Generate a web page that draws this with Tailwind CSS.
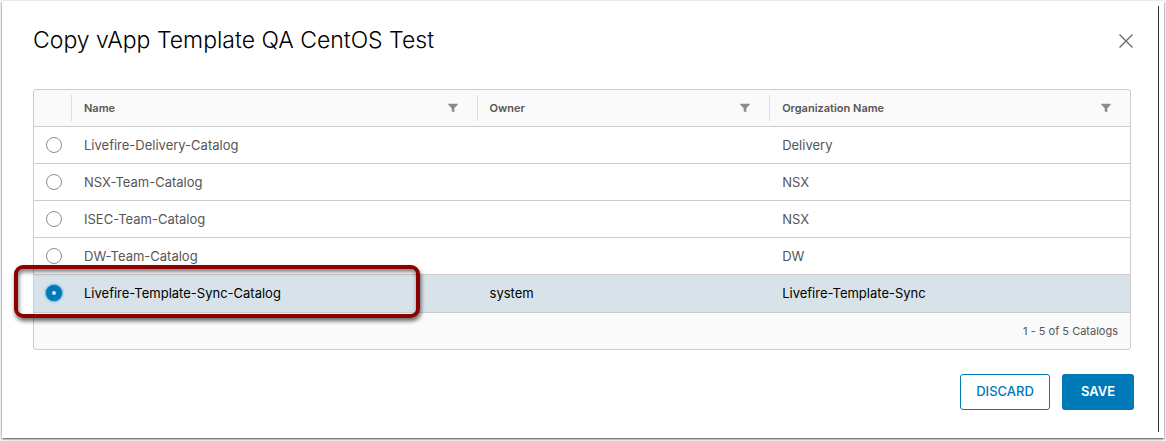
<!DOCTYPE html>
<html lang="en">
<head>
<meta charset="utf-8">
<meta name="viewport" content="width=device-width, initial-scale=1">
<title>Copy vApp Template</title>
<script src="https://cdn.jsdelivr.net/npm/@tailwindcss/browser@4"></script>
</head>
<body class="min-h-screen flex bg-[#f8f8f8] font-['Inter',sans-serif] text-[#565656]">
<svg class="hidden"><symbol id="filter" viewBox="0 0 10 10"><path d="M0.3 0.8h9.4v1L6.3 5.2v4.3L3.7 8.3V5.2L0.3 1.8z" fill="#8c8c8c"/></symbol></svg>
<main role="dialog" aria-labelledby="title" class="grow flex mt-px mx-0.5 mb-[3px] bg-white shadow-[0_1px_2px_rgba(0,0,0,0.7)] pt-[5px] pr-[5px] pb-[6px]">
  <div class="grow border-r border-[#333333] pt-4 pl-[31px] pr-6">
    <header class="flex items-center justify-between h-9">
      <h1 id="title" class="text-[23px] leading-9 font-light text-black">Copy vApp Template QA CentOS Test</h1>
      <button type="button" aria-label="Close" class="pt-0.5">
        <svg class="w-4 h-4" viewBox="0 0 16 16" fill="none" stroke="#666666" stroke-width="1.3"><path d="M1.5 1.5l13 13M14.5 1.5l-13 13"/></svg>
      </button>
    </header>
    <section class="mt-[31px] mr-[3px] border border-[#cccccc] rounded-[3px] bg-[#fafafa]">
      <table class="w-full table-fixed border-separate border-spacing-0 text-left text-[13px] leading-5">
        <colgroup><col class="w-[37px]"><col class="w-[37%]"><col class="w-[26.7%]"><col></colgroup>
        <thead class="text-[11px] text-[#565656]">
          <tr class="h-[37px]">
            <th class="border-b border-[#cccccc] p-0"></th>
            <th scope="col" class="border-b border-[#cccccc] p-0 font-semibold"><div class="flex items-center justify-between h-[26px] border-l border-[#dddddd] pl-3 pr-[19px]">Name<button type="button" aria-label="Filter by name"><svg class="w-[10px] h-[10px]"><use href="#filter"/></svg></button></div></th>
            <th scope="col" class="border-b border-[#cccccc] p-0 font-semibold"><div class="flex items-center justify-between h-[26px] border-l border-[#dddddd] pl-3 pr-[19px]">Owner<button type="button" aria-label="Filter by owner"><svg class="w-[10px] h-[10px]"><use href="#filter"/></svg></button></div></th>
            <th scope="col" class="border-b border-[#cccccc] p-0 font-semibold"><div class="flex items-center justify-between h-[26px] border-l border-[#dddddd] pl-3 pr-[19px]">Organization Name<button type="button" aria-label="Filter by organization name"><svg class="w-[10px] h-[10px]"><use href="#filter"/></svg></button></div></th>
          </tr>
        </thead>
        <tbody class="bg-white">
          <tr class="h-[37px]">
            <td class="border-b border-[#cccccc] p-0 pl-3"><input id="c1" type="radio" name="catalog" class="block appearance-none w-4 h-4 rounded-full border border-[#8c8c8c]"></td>
            <td class="border-b border-[#cccccc] p-0 pl-[13px]"><label for="c1">Livefire-Delivery-Catalog</label></td>
            <td class="border-b border-[#cccccc] p-0 pl-[13px]"></td>
            <td class="border-b border-[#cccccc] p-0 pl-[13px]">Delivery</td>
          </tr>
          <tr class="h-[37px]">
            <td class="border-b border-[#cccccc] p-0 pl-3"><input id="c2" type="radio" name="catalog" class="block appearance-none w-4 h-4 rounded-full border border-[#8c8c8c]"></td>
            <td class="border-b border-[#cccccc] p-0 pl-[13px]"><label for="c2">NSX-Team-Catalog</label></td>
            <td class="border-b border-[#cccccc] p-0 pl-[13px]"></td>
            <td class="border-b border-[#cccccc] p-0 pl-[13px]">NSX</td>
          </tr>
          <tr class="h-[37px]">
            <td class="border-b border-[#cccccc] p-0 pl-3"><input id="c3" type="radio" name="catalog" class="block appearance-none w-4 h-4 rounded-full border border-[#8c8c8c]"></td>
            <td class="border-b border-[#cccccc] p-0 pl-[13px]"><label for="c3">ISEC-Team-Catalog</label></td>
            <td class="border-b border-[#cccccc] p-0 pl-[13px]"></td>
            <td class="border-b border-[#cccccc] p-0 pl-[13px]">NSX</td>
          </tr>
          <tr class="h-[37px]">
            <td class="border-b border-[#cccccc] p-0 pl-3"><input id="c4" type="radio" name="catalog" class="block appearance-none w-4 h-4 rounded-full border border-[#8c8c8c]"></td>
            <td class="border-b border-[#cccccc] p-0 pl-[13px]"><label for="c4">DW-Team-Catalog</label></td>
            <td class="border-b border-[#cccccc] p-0 pl-[13px]"></td>
            <td class="border-b border-[#cccccc] p-0 pl-[13px]">DW</td>
          </tr>
          <tr class="relative h-[38px] bg-[#d8e3e9] text-black">
            <td class="border-b border-[#cccccc] p-0 pb-0.5 pl-3"><input id="c5" type="radio" name="catalog" checked class="block appearance-none w-4 h-4 rounded-full border-6 border-[#0079b8] bg-[#d8e3e9] shadow-[0_0_2px_1px_#49afd9]"><span class="pointer-events-none absolute -left-5 -top-[10px] w-[406px] h-[53px] rounded-[9px] border-4 border-[#8b0000] shadow-[1px_3px_4px_rgba(0,0,0,0.6),inset_1px_3px_4px_rgba(0,0,0,0.5)]"></span></td>
            <td class="border-b border-[#cccccc] p-0 pb-0.5 pl-[13px]"><label for="c5">Livefire-Template-Sync-Catalog</label></td>
            <td class="border-b border-[#cccccc] p-0 pb-0.5 pl-[13px]">system</td>
            <td class="border-b border-[#cccccc] p-0 pb-0.5 pl-[13px]">Livefire-Template-Sync</td>
          </tr>
        </tbody>
      </table>
      <p class="h-9 pr-3 text-right text-[11px] leading-9">1 - 5 of 5 Catalogs</p>
    </section>
    <footer class="mt-6 flex justify-end gap-3 text-[13px] font-medium">
      <button type="button" class="h-9 w-[90px] rounded-[3px] border border-[#0079b8] text-[#0079b8]">DISCARD</button>
      <button type="button" class="h-9 w-[72px] rounded-[3px] bg-[#0079b8] font-semibold text-white">SAVE</button>
    </footer>
  </div>
</main>
</body>
</html>
